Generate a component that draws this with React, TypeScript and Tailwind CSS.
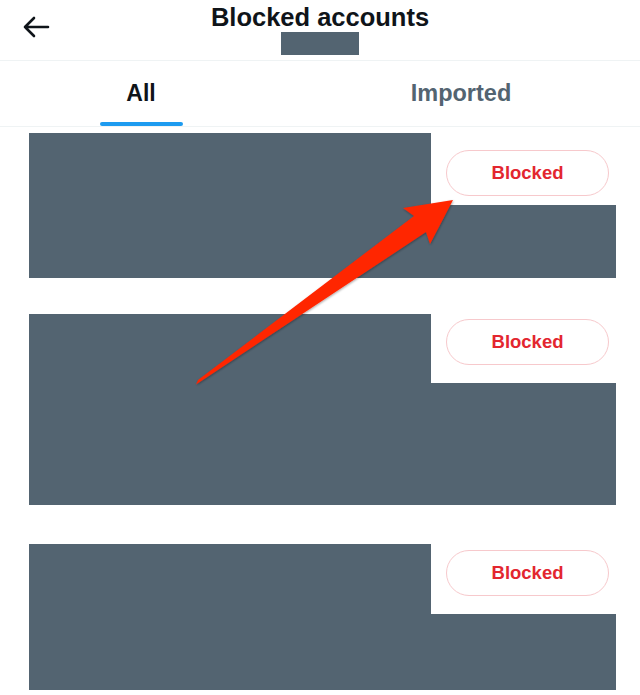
import React from "react";

type Row = {
  height: number;
  notch: number;
  buttonTop: number;
  gapBefore: number;
};

const rows: Row[] = [
  { height: 145, notch: 72, buttonTop: 17, gapBefore: 6 },
  { height: 191, notch: 69, buttonTop: 5, gapBefore: 36 },
  { height: 146, notch: 70, buttonTop: 6, gapBefore: 39 },
];

function BackArrow() {
  return (
    <svg width="30" height="24" viewBox="0 0 30 24" fill="none">
      <path
        d="M27 12H4M13 3L4 12L13 21"
        stroke="#0f1419"
        strokeWidth="2.6"
        strokeLinecap="round"
        strokeLinejoin="round"
      />
    </svg>
  );
}

function BlockedButton() {
  return (
    <button className="flex h-[46px] w-[163px] items-center justify-center rounded-full border-[1.5px] border-[#f7c9cc] bg-white text-[18.5px] font-bold text-[#e3262f]">
      Blocked
    </button>
  );
}

function AccountRow({ row }: { row: Row }) {
  return (
    <div
      className="flex pl-[29px]"
      style={{ height: row.height, marginTop: row.gapBefore }}
    >
      <div className="w-[402px] bg-[#536471]" />
      <div className="flex w-[185px] flex-col">
        <div className="pl-[15px]" style={{ height: row.notch, paddingTop: row.buttonTop }}>
          <BlockedButton />
        </div>
        <div className="flex-1 bg-[#536471]" />
      </div>
    </div>
  );
}

// red annotation arrow drawn on top of the list
function PointerArrow() {
  return (
    <svg
      className="pointer-events-none absolute left-0 top-0"
      width="640"
      height="695"
      viewBox="0 0 640 695"
    >
      <defs>
        <filter id="arrowShadow" x="-10%" y="-10%" width="120%" height="120%">
          <feDropShadow dx="0.5" dy="1" stdDeviation="0.8" floodColor="#000" floodOpacity="0.35" />
        </filter>
      </defs>
      <polygon
        points="196,384.5 426,232 430,244 453,200 403,208 414,216 198,380"
        fill="#ff2600"
        filter="url(#arrowShadow)"
      />
    </svg>
  );
}

export default function App() {
  return (
    <div
      className="relative h-[695px] w-[640px] overflow-hidden bg-white text-[#0f1419]"
      style={{ fontFamily: '"Liberation Sans", Arial, sans-serif' }}
    >
      <header className="grid h-[61px] grid-cols-[1fr_auto_1fr] border-b border-[#eff3f4]">
        <div className="pl-[21px] pt-[15px]">
          <BackArrow />
        </div>
        <div className="flex flex-col items-center pt-[2px]">
          <h1 className="text-[25.5px] font-bold leading-[30px]">
            Blocked accounts
          </h1>
          <div className="h-[23px] w-[78px] bg-[#536471]" />
        </div>
        <div />
      </header>

      <nav className="flex h-[66px] border-b border-[#eff3f4]">
        <div className="relative flex flex-1 items-center justify-center pr-[38px]">
          <span className="text-[23px] font-bold">All</span>
          <div className="absolute bottom-0 h-[4px] w-[83px] rounded-full bg-[#1d9bf0]" />
        </div>
        <div className="flex flex-1 items-center justify-center pr-[38px]">
          <span className="text-[23.5px] font-bold text-[#536471]">Imported</span>
        </div>
      </nav>

      <div>
        {rows.map((row, i) => (
          <AccountRow key={i} row={row} />
        ))}
      </div>

      <PointerArrow />
    </div>
  );
}
